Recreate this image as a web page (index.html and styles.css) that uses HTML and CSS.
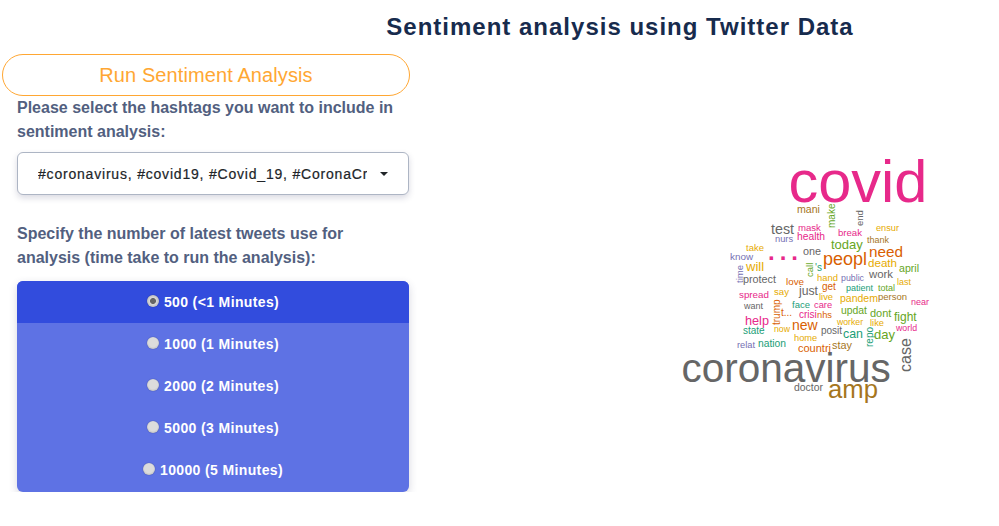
FILE: index.html
```html
<!DOCTYPE html>
<html lang="en">
<head>
  <meta charset="UTF-8">
  <meta name="viewport" content="width=device-width, initial-scale=1.0">
  <title>Sentiment analysis using Twitter Data</title>
  <link rel="stylesheet" href="styles.css">
</head>
<body>

  <h1>Sentiment analysis using Twitter Data</h1>

  <div class="main">
    <div class="controls">
      <button type="button" class="run-btn">Run Sentiment Analysis</button>

      <div class="panel">
        <p class="field-label">Please select the hashtags you want to include in sentiment analysis:</p>

        <button type="button" class="dropdown">
          <span class="dropdown-text">#coronavirus, #covid19, #Covid_19, #CoronaCrisis</span>
          <span class="caret"></span>
        </button>

        <p class="field-label tweets-label">Specify the number of latest tweets use for analysis (time take to run the analysis):</p>

        <div class="radio-group">
          <label class="radio-row active"><input type="radio" name="tweets" checked>500 (&lt;1 Minutes)</label>
          <label class="radio-row"><input type="radio" name="tweets">1000 (1 Minutes)</label>
          <label class="radio-row"><input type="radio" name="tweets">2000 (2 Minutes)</label>
          <label class="radio-row"><input type="radio" name="tweets">5000 (3 Minutes)</label>
          <label class="radio-row"><input type="radio" name="tweets">10000 (5 Minutes)</label>
        </div>
      </div>
    </div>

    <!-- word cloud, viewBox is in page coordinates -->
    <svg class="cloud" viewBox="670 130 270 280" width="270" height="280">
      <text class="pink" x="788.5" y="202" font-size="59.5">covid</text>
      <text class="dark" x="681.5" y="382" font-size="40.5">coronavirus</text>
      <text class="brown" x="828" y="398" font-size="25.7">amp</text>
      <text class="dark" transform="translate(911 372) rotate(-90)" font-size="16">case</text>

      <text class="brown" x="797" y="213" font-size="10.6">mani</text>
      <text class="green" transform="translate(835 228) rotate(-90)" font-size="10">make</text>
      <text class="dark" transform="translate(863 226) rotate(-90)" font-size="9.5">end</text>
      <text class="dark" x="771" y="234" font-size="14.3">test</text>
      <text class="pink" x="798" y="231" font-size="9.6">mask</text>
      <text class="pink" x="797" y="240" font-size="10.3">health</text>
      <text class="purple" x="775" y="242" font-size="9.3">nurs</text>
      <text class="pink" x="838" y="236" font-size="9.6">break</text>
      <text class="gold" x="876" y="231" font-size="9.2">ensur</text>
      <text class="brown" x="867" y="243" font-size="9">thank</text>
      <text class="green" x="831" y="249" font-size="13">today</text>
      <text class="orange" x="869" y="257" font-size="15.3">need</text>
      <text class="gold" x="746" y="251" font-size="9.5">take</text>
      <text class="dark" x="803" y="255" font-size="10.8">one</text>
      <text class="purple" x="730" y="260" font-size="9.9">know</text>
      <text class="pink dots" x="768" y="260" font-size="24">...</text>
      <text class="orange" x="823" y="265" font-size="18">peopl</text>
      <text class="gold" x="868" y="267" font-size="11.6">death</text>
      <text class="green" x="899" y="272" font-size="10.6">april</text>
      <text class="gold" x="746" y="271" font-size="13">will</text>
      <text class="green" transform="translate(813 277) rotate(-90)" font-size="9.5">call</text>
      <text class="teal" x="815" y="271" font-size="10">'s</text>
      <text class="purple" transform="translate(743 283) rotate(-90)" font-size="9.5">time</text>
      <text class="dark" x="743" y="283" font-size="10.8">protect</text>
      <text class="orange" x="786" y="285" font-size="9.8">love</text>
      <text class="gold" x="817" y="281" font-size="9.4">hand</text>
      <text class="purple" x="841" y="281" font-size="8.8">public</text>
      <text class="dark" x="869" y="278" font-size="11.4">work</text>

      <text class="orange" x="822" y="290" font-size="10">get</text>
      <text class="dark" x="799" y="295" font-size="12.2">just</text>
      <text class="gold" x="819" y="300" font-size="9.3">live</text>
      <text class="gold" x="774" y="295" font-size="9.6">say</text>
      <text class="pink" x="739" y="298" font-size="9.8">spread</text>
      <text class="teal" x="846" y="291" font-size="9">patient</text>
      <text class="green" x="878" y="291" font-size="9">total</text>
      <text class="gold" x="897" y="285" font-size="9">last</text>
      <text class="gold" x="840" y="302" font-size="10.5">pandem</text>
      <text class="brown" x="878" y="300" font-size="9.5">person</text>
      <text class="pink" x="911" y="305" font-size="9">near</text>
      <text class="dark" x="744" y="309" font-size="9">want</text>
      <text class="teal" x="792" y="308" font-size="9.5">face</text>
      <text class="pink" x="814" y="308" font-size="9.3">care</text>
      <text class="orange" transform="translate(780 325) rotate(-90)" font-size="10">trump</text>
      <text class="orange" x="781" y="316" font-size="10">t...</text>
      <text class="pink" x="799" y="318" font-size="10">crisi</text>
      <text class="orange" x="817" y="318" font-size="9.3">nhs</text>
      <text class="green" x="841" y="314" font-size="10.4">updat</text>
      <text class="green" x="870" y="317" font-size="11">dont</text>
      <text class="green" x="894" y="321" font-size="12">fight</text>
      <text class="gold" x="837" y="325" font-size="8.7">worker</text>
      <text class="gold" x="870" y="326" font-size="9.3">like</text>
      <text class="pink" x="745" y="325" font-size="12.7">help</text>
      <text class="orange" x="792" y="330" font-size="14">new</text>
      <text class="gold" x="774" y="332" font-size="8.7">now</text>
      <text class="dark" x="821" y="334" font-size="10">posit</text>
      <text class="teal" x="843" y="338" font-size="12.4">can</text>
      <text class="teal" transform="translate(873 347) rotate(-90)" font-size="10">repo</text>
      <text class="green" x="874" y="339" font-size="13">day</text>
      <text class="pink" x="896" y="331" font-size="8.8">world</text>
      <text class="teal" x="743" y="334" font-size="10">state</text>
      <text class="gold" x="794" y="341" font-size="9.3">home</text>
      <text class="teal" x="758" y="347" font-size="10.3">nation</text>
      <text class="purple" x="737" y="348" font-size="9.3">relat</text>
      <text class="orange" x="798" y="352" font-size="11">countri</text>
      <text class="brown" x="832" y="349" font-size="10.9">stay</text>
      <text class="dark" x="794" y="391" font-size="10.4">doctor</text>
    </svg>
  </div>

</body>
</html>
```

FILE: styles.css
```css
body {
  margin: 0;
  background: #fff;
  font-family: "Liberation Sans", Arial, sans-serif;
}
h1 {
  margin: 0;
  height: 54px;
  padding-left: 241px;
  font-size: 24px;
  line-height: 53px;
  letter-spacing: 1px;
  text-align: center;
  color: #172b4d;
}
.main {
  display: flex;
  padding-left: 2px;
}
.controls {
  width: 408px;
}
.run-btn {
  display: block;
  width: 100%;
  height: 42px;
  padding: 0;
  background: #fff;
  border: 1px solid #ffa733;
  border-radius: 21px;
  color: #ffa733;
  font: 20px "Liberation Sans", Arial, sans-serif;
  letter-spacing: 0.1px;
}
.panel {
  padding-left: 15px;
}
.field-label {
  margin: 0;
  font-size: 16px;
  font-weight: bold;
  line-height: 24px;
  color: #525f7f;
}
.dropdown {
  display: flex;
  align-items: center;
  width: 392px;
  height: 43px;
  margin: 8px 0 27px;
  padding: 0 20px;
  background: #fff;
  border: 1px solid #adb5c4;
  border-radius: 6px;
  box-shadow: 0 3px 6px rgba(50, 50, 93, 0.18);
  color: #212529;
  font: 14px "Liberation Sans", Arial, sans-serif;
  letter-spacing: 0.8px;
  -webkit-text-stroke: 0.2px #212529;
}
.dropdown-text {
  flex: 1;
  overflow: hidden;
  white-space: nowrap;
  text-align: left;
}
.caret {
  margin-left: 13px;
  border-top: 4px solid #212529;
  border-left: 4px solid transparent;
  border-right: 4px solid transparent;
}
.tweets-label {
  max-width: 370px;
  margin-bottom: 11px;
}
.radio-group {
  width: 392px;
  padding-bottom: 1px;
  background: #5e72e4;
  border-radius: 6px;
  overflow: hidden;
  box-shadow: 0 3px 8px rgba(50, 50, 93, 0.2);
}
.radio-row {
  display: flex;
  align-items: center;
  justify-content: center;
  height: 42px;
  font-size: 14px;
  font-weight: bold;
  letter-spacing: 0.37px;
  color: #fff;
}
.radio-row.active {
  background: #324cdd;
}
.radio-row input {
  appearance: none;
  width: 12px;
  height: 12px;
  margin: -3px 5px 0 0;
  border-radius: 50%;
  background: radial-gradient(circle at 50% 45%, #dcdcdc 50%, #a8a8a8 100%);
  box-shadow: 0 0 1px rgba(0, 0, 0, 0.5);
}
.radio-row input:checked {
  background: radial-gradient(circle, #666 30%, #d8d8d8 40%, #aaa 100%);
}
.cloud {
  margin: 76px 0 0 260px;
  font-family: "Liberation Sans", Arial, sans-serif;
}
.dots {
  font-weight: bold;
  letter-spacing: 5px;
}
.pink { fill: #e7298a; }
.dark { fill: #666; }
.brown { fill: #a6761d; }
.green { fill: #66a61e; }
.orange { fill: #d95f02; }
.gold { fill: #e6ab02; }
.teal { fill: #1b9e77; }
.purple { fill: #7570b3; }
```
